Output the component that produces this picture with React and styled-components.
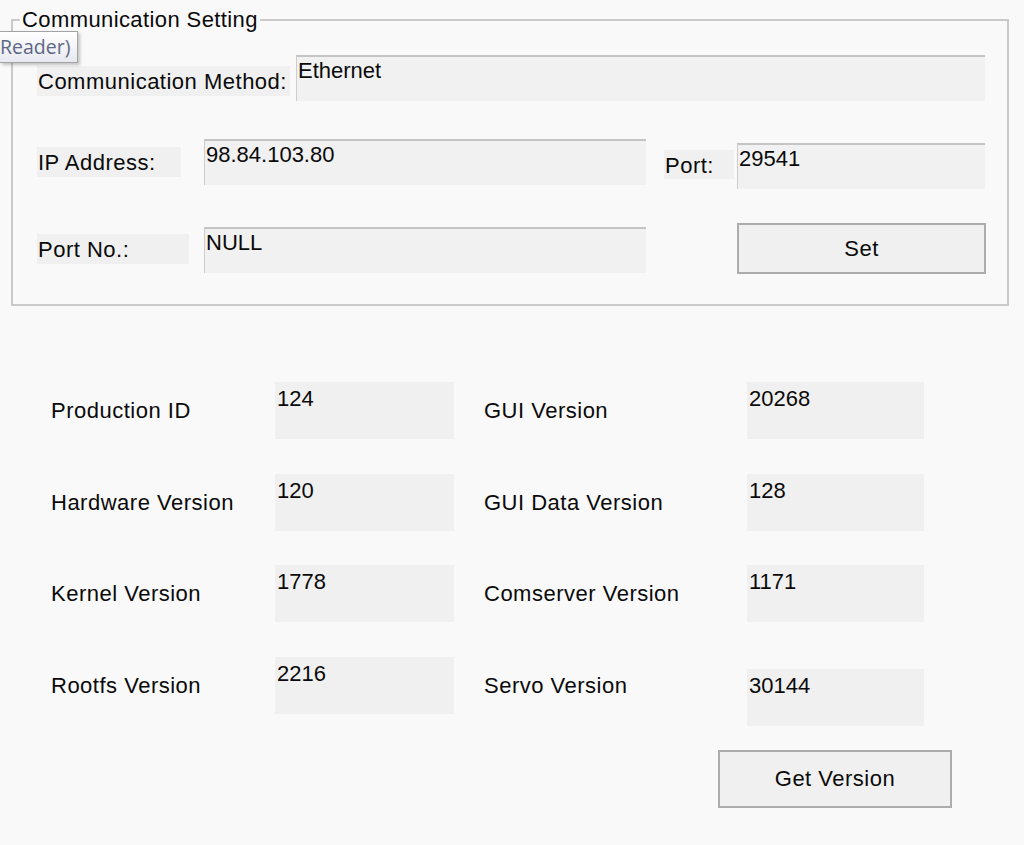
import React from "react";
import styled, { createGlobalStyle } from "styled-components";

const GlobalStyle = createGlobalStyle`
  html, body {
    margin: 0;
    padding: 0;
    background: #f9f9f9;
  }
  body {
    font-family: "Liberation Sans", Arial, sans-serif;
    font-size: 22px;
    letter-spacing: 0.5px;
    color: #0a0a0a;
  }
  * { box-sizing: border-box; }
`;

const Page = styled.div`
  position: relative;
  width: 1024px;
  height: 845px;
  overflow: hidden;
  background: #f9f9f9;
  padding-top: 8px;
`;

const GroupBox = styled.fieldset`
  margin: 0 15px 0 11px;
  padding: 0;
  border: 2px solid #cacaca;
  min-width: 0;
`;

const Legend = styled.legend`
  margin-left: 7px;
  padding: 0 2px 0 2px;
  font-size: 22px;
  line-height: 23px;
  letter-spacing: 0.4px;
`;

const GroupBody = styled.div`
  display: flex;
  flex-direction: column;
  padding: 24px 0 30px 24px;
`;

const Row = styled.div`
  display: flex;
  align-items: flex-start;
  height: ${(p) => p.$h}px;
  margin-top: ${(p) => p.$mt || 0}px;
`;

const FieldLabel = styled.div`
  flex: none;
  width: ${(p) => p.$w}px;
  height: ${(p) => p.$h || 30}px;
  margin-left: ${(p) => p.$ml || 0}px;
  margin-top: ${(p) => p.$mt || 0}px;
  background: #f0f0f0;
  padding: 1px 0 0 1px;
  line-height: ${(p) => p.$h || 30}px;
  white-space: nowrap;
`;

const TextBox = styled.div`
  flex: none;
  width: ${(p) => p.$w}px;
  height: 46px;
  margin-left: ${(p) => p.$ml || 0}px;
  margin-top: ${(p) => p.$mt || 0}px;
  background: #f1f1f1;
  border-top: 2px solid #c4c4c4;
  border-left: 1px solid #cdcdcd;
  padding: 2px 0 0 1px;
  font-size: 22px;
  letter-spacing: 0;
  line-height: 23px;
  white-space: nowrap;
`;

const Button = styled.div`
  flex: none;
  display: flex;
  align-items: center;
  justify-content: center;
  width: ${(p) => p.$w}px;
  height: ${(p) => p.$h}px;
  margin-left: ${(p) => p.$ml || 0}px;
  margin-top: ${(p) => p.$mt || 0}px;
  background: #f0f0f0;
  border: 2px solid #acacac;
`;

const VersionGrid = styled.div`
  display: grid;
  grid-template-columns: 403px 440px;
  grid-auto-rows: 57px;
  column-gap: 30px;
  row-gap: 34.67px;
  margin-top: 76px;
  padding-left: 51px;
`;

const VersionItem = styled.div`
  display: flex;
  align-items: flex-start;
  height: 57px;
`;

const VersionLabel = styled.div`
  flex: none;
  width: ${(p) => p.$w}px;
  height: 57px;
  display: flex;
  align-items: center;
  padding-top: 1px;
  white-space: nowrap;
`;

const ValueBox = styled.div`
  flex: none;
  width: ${(p) => p.$w}px;
  height: 57px;
  margin-top: ${(p) => p.$offset || 0}px;
  background: #f0f0f0;
  padding: 5px 0 0 2px;
  font-size: 22px;
  letter-spacing: 0;
  line-height: 23px;
`;

const Footer = styled.div`
  display: flex;
  padding-left: 718px;
  margin-top: 36px;
`;

const Tooltip = styled.div`
  position: absolute;
  left: 0;
  top: 31px;
  width: 78px;
  height: 32px;
  background: linear-gradient(#ffffff, #e8e9f0);
  border: 1px solid #a3a3a3;
  border-left: none;
  box-shadow: 2px 2px 3px rgba(0, 0, 0, 0.22);
  font-family: "Open Sans", "Liberation Sans", sans-serif;
  font-size: 19.5px;
  letter-spacing: 0;
  line-height: 29px;
  color: #5d6784;
  white-space: nowrap;
`;

const left = [
  { label: "Production ID", value: "124" },
  { label: "Hardware Version", value: "120" },
  { label: "Kernel Version", value: "1778" },
  { label: "Rootfs Version", value: "2216" },
];

const right = [
  { label: "GUI Version", value: "20268" },
  { label: "GUI Data Version", value: "128" },
  { label: "Comserver Version", value: "1171" },
  { label: "Servo Version", value: "30144", offset: 12 },
];

export default function App() {
  return (
    <>
      <GlobalStyle />
      <Page>
        <GroupBox>
          <Legend>Communication Setting</Legend>
          <GroupBody>
            <Row $h={46}>
              <FieldLabel $w={253} $mt={11}>Communication Method:</FieldLabel>
              <TextBox $w={689} $ml={6}>Ethernet</TextBox>
            </Row>
            <Row $h={50} $mt={38}>
              <FieldLabel $w={144} $mt={8}>IP Address:</FieldLabel>
              <TextBox $w={442} $ml={23}>98.84.103.80</TextBox>
              <FieldLabel $w={70} $ml={18} $mt={11} $h={29}>Port:</FieldLabel>
              <TextBox $w={248} $ml={3} $mt={4}>29541</TextBox>
            </Row>
            <Row $h={51} $mt={34}>
              <FieldLabel $w={152} $mt={11}>Port No.:</FieldLabel>
              <TextBox $w={442} $ml={15} $mt={4}>NULL</TextBox>
              <Button $w={249} $h={51} $ml={91}>Set</Button>
            </Row>
          </GroupBody>
        </GroupBox>

        <VersionGrid>
          {left.map((l, i) => (
            <React.Fragment key={l.label}>
              <VersionItem>
                <VersionLabel $w={224}>{l.label}</VersionLabel>
                <ValueBox $w={179}>{l.value}</ValueBox>
              </VersionItem>
              <VersionItem>
                <VersionLabel $w={263}>{right[i].label}</VersionLabel>
                <ValueBox $w={177} $offset={right[i].offset}>{right[i].value}</ValueBox>
              </VersionItem>
            </React.Fragment>
          ))}
        </VersionGrid>

        <Footer>
          <Button $w={234} $h={58}>Get Version</Button>
        </Footer>

        <Tooltip>Reader)</Tooltip>
      </Page>
    </>
  );
}
